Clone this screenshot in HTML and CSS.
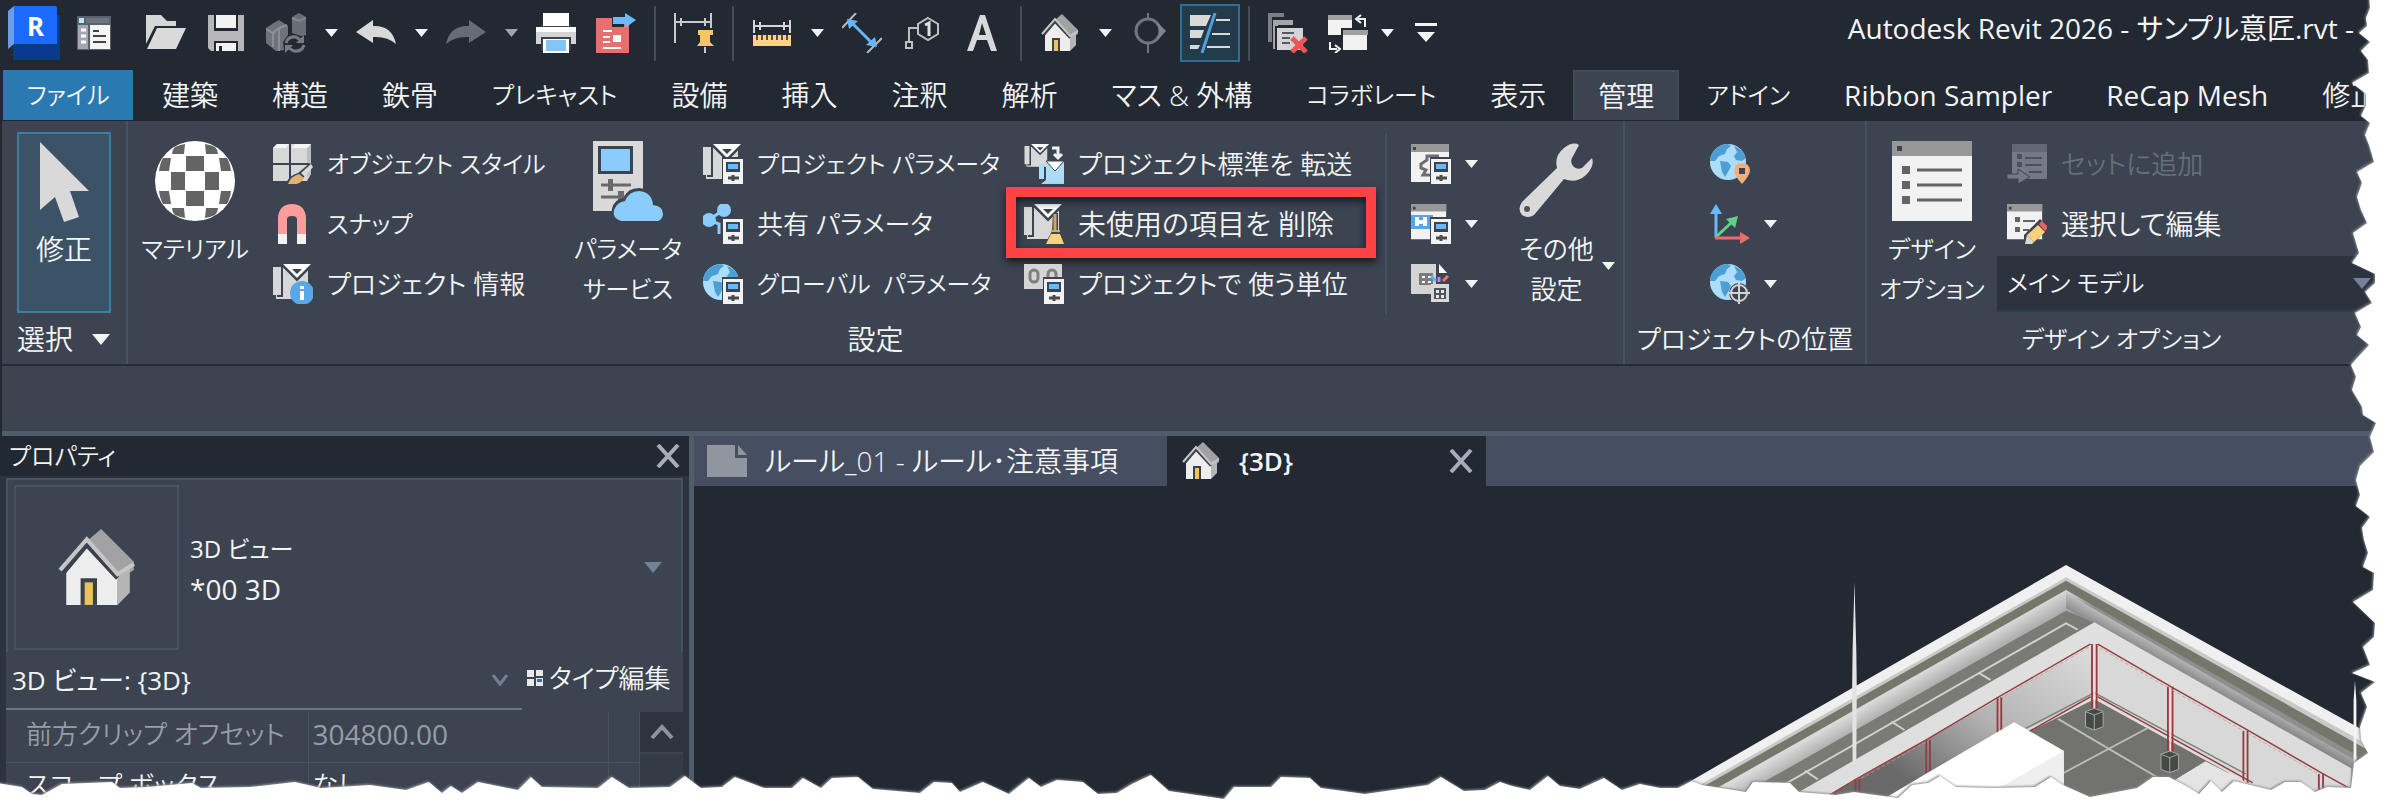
FILE: index.html
```html
<!DOCTYPE html>
<html lang="ja">
<head>
<meta charset="utf-8">
<title>Autodesk Revit 2026 - サンプル意匠.rvt</title>
<link rel="stylesheet" href="styles.css">
</head>
<body>
<svg class="defs" aria-hidden="true">
  <defs>
    <symbol id="caret" viewBox="0 0 13 8"><path d="M0 0h13L6.500 8z" fill="currentColor"/></symbol>
    <symbol id="house" viewBox="0 0 40 40">
      <path d="M15 7L22 1L38 17V21L30 26z" fill="#a2a2a2"/>
      <path d="M30 24l6-5v13l-6 6z" fill="#b5b5b5"/>
      <path d="M5 20L15 9l15 15v14H5z" fill="#ededed"/>
      <path d="M4 22L15 9l15 16" fill="none" stroke="#3b424e" stroke-width="2"/>
      <path d="M2 21L15 6l15 17 8-5" fill="none" stroke="#c6c6c6" stroke-width="2"/>
      <path d="M12 25h8v13h-8z" fill="#3b424e"/><path d="M14 27h4v11h-4z" fill="#edc45c"/>
    </symbol>
    <symbol id="globe" viewBox="0 0 40 40">
      <circle cx="18" cy="18" r="18" fill="#aeddfb"/>
      <path d="M3 8Q9 0 18 0l3 2-4 3-2 5-6 2-4 5H0Q0 12 3 8zM24 2q8 2 12 12l-4 3-6-1-2-4 3-4zM10 17l8 1 3 4-3 6-3 5-3-5z" fill="#4b9fd5"/>
    </symbol>
    <symbol id="badge" viewBox="0 0 21 27">
      <path d="M0 0h21v27H0z" fill="#3c4452"/><path d="M1 2h20v25H1z" fill="#f2f2f2"/>
      <path d="M4 5h14v10H4z" fill="#3c4452"/><path d="M6 7h10v5H6z" fill="#69b8f7"/>
      <path d="M6 21h11M11 18v6" stroke="#4a4a4a" stroke-width="3"/>
    </symbol>
    <symbol id="plan" viewBox="0 0 40 40">
      <path d="M0 3h8v32H3v-4H0zM10 3l14 13L35 5v30H4v-3h6z" fill="#d8d8d8"/>
      <path d="M9 3v29H4" fill="none" stroke="#3c4452" stroke-width="2"/>
      <path d="M10 0h28L24 14z" fill="#fff"/><path d="M8 0l16 16L39 1" fill="none" stroke="#3c4452" stroke-width="2"/>
      <path d="M19 5h10l-5 5z" fill="#3c4452"/>
    </symbol>
    <symbol id="sheet" viewBox="0 0 40 40">
      <path d="M0 0h38v38H0z" fill="#f2f2f2"/><path d="M0 0h38v8H0z" fill="#989898"/><path d="M2 3h3v3H2z" fill="#3c4452"/>
    </symbol>
    <symbol id="close" viewBox="0 0 24 24"><path d="M2 1L22 23M22 1L2 23" stroke="#a4acb9" stroke-width="4"/></symbol>
  </defs>
</svg>

<div class="app">
  <header class="titlebar">
    <div class="qat" role="toolbar" aria-label="クイック アクセス">
      <button class="qb" aria-label="Revit"><svg width="52" height="54" viewBox="0 0 52 54"><path d="M5 9h47v43q0 2-2 2H5z" fill="#0a3a90"/><path d="M0 5L6 0v38l-6 5z" fill="#6a9dea"/><path d="M6 0h41q2 0 2 2v36H6z" fill="#1b6bff"/><text x="19" y="30" class="logo-r">R</text></svg></button>
      <button class="qb" aria-label="プロパティ"><svg width="40" height="40" viewBox="0 0 40 40"><path d="M3 3h34v34H3z" fill="#59616d"/><path d="M5 5h5v5H5z" fill="#bfe4fb"/><path d="M12 5h23v5H12z" fill="#6c7480"/><path d="M4 12h10v24H4z" fill="#a3a8b0"/><path d="M16 12h20v24H16z" fill="#f4f4f4"/><path d="M7 17h5M7 23h5M7 29h5" stroke="#fff" stroke-width="3"/><path d="M19 18h6M19 23h13M19 29h13" stroke="#444" stroke-width="2"/></svg></button>
      <button class="qb qb-gap" aria-label="開く"><svg width="40" height="40" viewBox="0 0 40 40"><path d="M0 2h15l6 6h9v5H9L0 31z" fill="#d6d6d6"/><path d="M11 15h29L30 36H1z" fill="#dadada"/></svg></button>
      <button class="qb" aria-label="保存"><svg width="40" height="40" viewBox="0 0 40 40"><path d="M2 2h36v36H5l-3-3z" fill="#b7b7b7"/><path d="M8 2h24v16H8zM8 28h24v10H8z" fill="#222933"/><path d="M10 2h20v13H10z" fill="#f2f2f2"/><path d="M10 30h20v8H16v-5h-3v5h-3z" fill="#f2f2f2"/></svg></button>
      <button class="qb" aria-label="同期"><svg width="40" height="40" viewBox="0 0 40 40"><path d="M0 15l6-4 7-4 9 6v9l-5 7 1 8-8 1-10-8z" fill="#6f7379"/><path d="M26 4l7-4 7 4v18l-5 1-9-3z" fill="#6a6e74"/><path d="M0 16l7 4 6-5 8-3M7 20v14M13 16v22" fill="none" stroke="#8b8f95" stroke-width="2"/><path d="M26 5l7 3 7-3" fill="none" stroke="#85898f" stroke-width="2"/><path d="M20 30q2-7 10-6l6 4M38 32q-2 7-10 6l-7-4" fill="none" stroke="#777b81" stroke-width="3"/><path d="M38 22v8h-8zM19 40v-8h8z" fill="#777b81"/></svg></button>
      <button class="qd" aria-label="同期メニュー"><svg class="caret"><use href="#caret"/></svg></button>
      <button class="qb" aria-label="元に戻す"><svg width="40" height="26" viewBox="0 0 40 26"><path d="M0 12L17 0v6Q36 5 40 24q-9-8-23-7v6z" fill="#d9d9d9"/></svg></button>
      <button class="qd" aria-label="元に戻すメニュー"><svg class="caret"><use href="#caret"/></svg></button>
      <button class="qb" aria-label="やり直し"><svg width="40" height="26" viewBox="0 0 40 26"><path d="M40 12L23 0v6Q4 5 0 24q9-8 23-7v6z" fill="#676c74"/></svg></button>
      <button class="qd dim" aria-label="やり直しメニュー"><svg class="caret"><use href="#caret"/></svg></button>
      <button class="qb" aria-label="印刷"><svg width="40" height="40" viewBox="0 0 40 40"><path d="M0 14h40v17H0z" fill="#d4d4d4"/><path d="M0 14h40v5H0z" fill="#fff"/><path d="M5 12h30v2H5zM5 24h30v14H5z" fill="#3a424d"/><path d="M7 0h26v13H7z" fill="#fff"/><path d="M7 26h26v14H7z" fill="#fff"/><path d="M10 27h20v11H10z" fill="#84c5f8"/></svg></button>
      <button class="qb" aria-label="PDF 書き出し"><svg width="40" height="40" viewBox="0 0 40 40"><path d="M0 5h16v9h12v-4h5v30H0z" fill="#e57070"/><path d="M7 18h9M7 24h7M7 29h7M7 35h18" stroke="#fff" stroke-width="2"/><path d="M17 22h8v7h-8z" fill="#fff"/><path d="M17 4h12V0l11 7-11 8v-4H17z" fill="#6cbafa"/></svg></button>
      <span class="qs"></span>
      <button class="qb" aria-label="固定寸法"><svg width="40" height="40" viewBox="0 0 40 40"><path d="M1 0v30M37 0v15M1 9h36M7 5v8M31 5v8" stroke="#c9c9c9" stroke-width="2"/><path d="M24 17h15v5h-3v7l4 4H23l3-4v-7h-2z" fill="#f6c46a"/><path d="M31 34v6" stroke="#c9c9c9" stroke-width="2"/></svg></button>
      <span class="qs"></span>
      <button class="qb" aria-label="計測"><svg width="40" height="40" viewBox="0 0 40 40"><path d="M2 7v13M38 7v13M2 13h36M8 9v8M32 9v8" stroke="#d6d6d6" stroke-width="2"/><path d="M1 22h38v11H1z" fill="#ffd47d"/><path d="M5 22v5M10 22v5M15 22v5M20 22v5M25 22v5M30 22v5M35 22v5" stroke="#5a4d35" stroke-width="2"/></svg></button>
      <button class="qd" aria-label="計測メニュー"><svg class="caret"><use href="#caret"/></svg></button>
      <button class="qb" aria-label="平行寸法"><svg width="40" height="40" viewBox="0 0 40 40"><path d="M14 0L0 15M40 25L25 40" stroke="#b9b9b9" stroke-width="2"/><path d="M9 9l22 22" stroke="#68b6f5" stroke-width="3"/><path d="M5 6l11 2-9 8zM35 34l-11-2 9-8z" fill="#68b6f5"/></svg></button>
      <button class="qb" aria-label="タグ"><svg width="40" height="40" viewBox="0 0 40 40"><path d="M26 5l10 6v10l-10 6-10-6V11zM16 15H7v13" fill="none" stroke="#bfbfbf" stroke-width="2"/><path d="M4 29h6v6H4z" fill="none" stroke="#bfbfbf" stroke-width="2"/><path d="M23 12l4-2v13" fill="none" stroke="#e0e0e0" stroke-width="3"/></svg></button>
      <button class="qb" aria-label="文字"><svg width="40" height="40" viewBox="0 0 40 40"><path d="M5 38L18 2h5l12 36h-6l-4-11H15l-4 11zM17 22h7L20 10z" fill="#d9d9d9" fill-rule="evenodd"/></svg></button>
      <span class="qs"></span>
      <button class="qb" aria-label="既定の 3D ビュー"><svg width="40" height="40"><use href="#house"/></svg></button>
      <button class="qd" aria-label="3D ビューメニュー"><svg class="caret"><use href="#caret"/></svg></button>
      <button class="qb" aria-label="断面"><svg width="40" height="40" viewBox="0 0 40 40"><circle cx="18" cy="18" r="12" fill="none" stroke="#70757d" stroke-width="3"/><path d="M26 8l10 10-10 11q7-10 0-21z" fill="#80858d"/><path d="M18 0v7M18 30v10" stroke="#70757d" stroke-width="2"/></svg></button>
      <button class="qb toggle" aria-label="細線" aria-pressed="true"><svg width="40" height="40" viewBox="0 0 40 40"><path d="M0 2h21l-5 11H0zM0 17h14l-3 8H0zM0 32h10l-2 4H0z" fill="#d9d9d9"/><path d="M26 7h14M22 21h18M17 34h23" stroke="#d9d9d9" stroke-width="2"/><path d="M25 0L12 40" stroke="#4f9fd8" stroke-width="3"/></svg></button>
      <span class="qs"></span>
      <button class="qb" aria-label="非アクティブを閉じる"><svg width="40" height="40" viewBox="0 0 40 40"><path d="M0 0h16v4H4v25H0z" fill="#7a7f87"/><path d="M5 7h20v5H10v24H5z" fill="#a6a6a6"/><path d="M8 14h28v24H8z" fill="#d4d4d4" stroke="#222933" stroke-width="2"/><path d="M14 20h12M14 25h8M14 30h8" stroke="#555b64" stroke-width="2"/><path d="M24 25l14 14M38 25L24 39" stroke="#ee5454" stroke-width="5"/></svg></button>
      <button class="qb" aria-label="ウィンドウ切り替え"><svg width="40" height="40" viewBox="0 0 40 40"><path d="M0 2h24v20H0z" fill="#f2f2f2"/><path d="M0 2h24v5H0z" fill="#a0a0a0"/><path d="M14 16h26v22H14z" fill="#f2f2f2" stroke="#222933" stroke-width="2"/><path d="M15 17h25v5H15z" fill="#a0a0a0"/><path d="M37 14V6h-7M33 2l-5 4 5 4M2 29v7h7M7 32l5 4-5 4" fill="none" stroke="#f2f2f2" stroke-width="2"/></svg></button>
      <button class="qd snug" aria-label="ウィンドウメニュー"><svg class="caret"><use href="#caret"/></svg></button>
      <button class="qd" aria-label="カスタマイズ"><svg width="22" height="20" viewBox="0 0 22 20"><path d="M0 0h22v3H0zM2 9h18l-9 10z" fill="#f4f4f4"/></svg></button>
    </div>
    <h1 class="title">Autodesk Revit 2026 - サンプル意匠.rvt -</h1>
  </header>

  <nav class="tabs" aria-label="リボン タブ">
    <button class="tab file k">ファイル</button>
    <button class="tab">建築</button>
    <button class="tab">構造</button>
    <button class="tab">鉄骨</button>
    <button class="tab k">プレキャスト</button>
    <button class="tab">設備</button>
    <button class="tab">挿入</button>
    <button class="tab">注釈</button>
    <button class="tab">解析</button>
    <button class="tab">マス &amp; 外構</button>
    <button class="tab k">コラボレート</button>
    <button class="tab">表示</button>
    <button class="tab active">管理</button>
    <button class="tab k">アドイン</button>
    <button class="tab latin">Ribbon Sampler</button>
    <button class="tab latin">ReCap Mesh</button>
    <button class="tab">修正</button>
  </nav>

  <section class="ribbon">
    <div class="panel p-select">
      <div class="body">
        <button class="modify"><svg width="50" height="80" viewBox="0 0 50 80"><path d="M1 0L50 49H31l9 26-15 5-9-25L1 68z" fill="#d9d9d9"/></svg><span class="lbl">修正</span></button>
      </div>
      <button class="ptitle">選択 <svg class="caret big"><use href="#caret"/></svg></button>
    </div>

    <div class="panel p-set">
      <div class="body">
        <button class="large w-mat"><svg width="80" height="80" viewBox="0 0 80 80"><circle cx="40" cy="40" r="40" fill="#fff"/><g fill="#646464"><path d="M31 15h18v15H31zM31 50h18v15H31zM16 31h14v18H16zM50 31h14v18H50z"/><path d="M20 6q4-2 10-3l-1 10H17q0-4 3-7zM60 6q-4-2-10-3l1 10h12q0-4-3-7zM20 74q4 2 10 3l-1-10H17q0 4 3 7zM60 74q-4 2-10 3l1-10h12q0 4-3 7z"/><path d="M8 17h8l-2 13H4q1-8 4-13zM72 17h-8l2 13h10q-1-8-4-13zM8 63h8l-2-13H4q1 8 4 13zM72 63h-8l2-13h10q-1 8-4 13z"/></g></svg><span class="lbl k">マテリアル</span></button>
        <div class="stack w-c1">
          <button class="row k"><svg width="40" height="40" viewBox="0 0 40 40"><path d="M0 4l4-4h34v30l-4 7H0z" fill="#d8d8d8"/><path d="M34 4l4-4v30l-4 3z" fill="#bdbdbd"/><path d="M0 4l4-4h12l-3 4zM19 4l3-4h16l-4 4z" fill="#f4f4f4"/><path d="M17 0v38M0 20h36" stroke="#3c4452" stroke-width="2"/><path d="M13 40q2-8 12-11l12-10 3 4-10 11q-4 8-17 8z" fill="#3c4452"/><path d="M15 40q3-8 11-10l5 4q-4 8-16 6z" fill="#e0b272"/><path d="M28 29l10-9 2 3-8 10z" fill="#d9d9d9"/></svg>オブジェクト スタイル</button>
          <button class="row k"><svg width="40" height="40" viewBox="0 0 40 40"><path d="M5 40V14Q6 0 19 0t14 14v26h-9V15q0-3-5-3t-5 3v25z" fill="#ff9c9c"/><path d="M5 30h9v10H5zM24 30h9v10h-9z" fill="#f2f2f2"/></svg>スナップ</button>
          <button class="row m"><svg width="40" height="40" viewBox="0 0 40 40"><use href="#plan" width="40" height="40"/><circle cx="29" cy="29" r="12" fill="#57a8e6"/><path d="M27 22h4v3h-4zM27 27h4v9h-4z" fill="#fff"/></svg>プロジェクト 情報</button>
        </div>
        <button class="large w-svc"><svg width="80" height="80" viewBox="0 0 80 80"><path d="M5 0h50v70H5z" fill="#d9d9d9"/><path d="M10 5h35v28H10z" fill="#3c4452"/><path d="M13 8h29v22H13z" fill="#8accfc"/><path d="M13 44h30M13 56h30" stroke="#6a6a6a" stroke-width="3"/><path d="M20 38h5v12h-5zM30 50h6v12h-6z" fill="#6a6a6a"/><path d="M33 82Q22 78 24 68q2-10 12-11 3-10 15-10 13 1 15 14 10 1 10 11 0 7-6 10z" fill="#3c4452"/><path d="M33 80Q24 77 26 69q3-8 11-9 4-10 14-10 13 1 14 14 10 1 10 9 0 5-5 7z" fill="#8accfc"/></svg><span class="lbl k">パラメータ<br>サービス</span></button>
        <div class="stack w-c2">
          <button class="row k"><svg width="40" height="40" viewBox="0 0 40 40"><use href="#plan" width="40" height="40"/><use href="#badge" x="19" y="13" width="21" height="27"/></svg>プロジェクト パラメータ</button>
          <button class="row m"><svg width="40" height="40" viewBox="0 0 40 40"><path d="M6 16L20 6M6 16l10 4v10" fill="none" stroke="#8accfc" stroke-width="3"/><circle cx="6" cy="16" r="7" fill="#8accfc"/><circle cx="21" cy="6" r="7" fill="#8accfc"/><use href="#badge" x="19" y="13" width="21" height="27"/></svg>共有 パラメータ</button>
          <button class="row k"><svg width="40" height="40" viewBox="0 0 40 40"><use href="#globe" width="40" height="40"/><use href="#badge" x="19" y="13" width="21" height="27"/></svg><span class="pre">グローバル  パラメータ</span></button>
        </div>
        <div class="stack w-c3">
          <button class="row m"><svg width="40" height="40" viewBox="0 0 40 40"><use href="#plan" width="27" height="26"/><path d="M28 4h6v8M30 10l4 4 4-4" fill="none" stroke="#f2f2f2" stroke-width="3"/><path d="M15 20h5v15h-5zM22 17h18v23H17l5-4z" fill="#aedbfa"/><path d="M22 17h18l-9 10z" fill="#fff" stroke="#3c4452"/></svg>プロジェクト標準を 転送</button>
          <button class="row marked"><svg width="40" height="40" viewBox="0 0 40 40"><use href="#plan" width="40" height="40"/><path d="M29 9h5v18l6 13H21l7-13z" fill="#3c4452"/><path d="M31 10v18" stroke="#d8a55c" stroke-width="3"/><path d="M27 30h9l4 10H22z" fill="#ffd27a"/><path d="M27 26h9v2h-9z" fill="#d8a55c"/></svg>未使用の項目を 削除</button>
          <button class="row m"><svg width="40" height="40" viewBox="0 0 40 40"><path d="M0 0h38v25H0z" fill="#d4d4d4"/><rect x="6" y="6" width="8" height="12" rx="4" fill="none" stroke="#808080" stroke-width="3"/><rect x="24" y="6" width="8" height="12" rx="4" fill="none" stroke="#808080" stroke-width="3"/><use href="#badge" x="19" y="13" width="21" height="27"/></svg>プロジェクトで 使う単位</button>
        </div>
        <div class="stack w-c4">
          <button class="row tight" aria-label="設備設定"><svg width="40" height="40" viewBox="0 0 40 40"><use href="#sheet" width="40" height="40"/><path d="M28 12H16v4l-6 4v4l5 2-3 5h8" fill="none" stroke="#6e6e6e" stroke-width="3"/><use href="#badge" x="19" y="13" width="21" height="27"/></svg><svg class="caret"><use href="#caret"/></svg></button>
          <button class="row tight" aria-label="構造設定"><svg width="40" height="40" viewBox="0 0 40 40"><use href="#sheet" width="37" height="37"/><path d="M0 11h22v14H0z" fill="#58a6e3"/><path d="M6 13v9M14 13v9M6 18h8" stroke="#fff" stroke-width="4"/><use href="#badge" x="19" y="13" width="21" height="27"/></svg><svg class="caret"><use href="#caret"/></svg></button>
          <button class="row tight" aria-label="パネル集計表"><svg width="40" height="40" viewBox="0 0 40 40"><path d="M0 0h25v30H0z" fill="#d4d4d4"/><path d="M8 9h14v12H8z" fill="#7b7b7b"/><path d="M11 12h3v2h-3zM17 12h3v2h-3zM11 17h3v2h-3zM17 17h3v2h-3z" fill="#fff"/><path d="M28 0l8 9h-8z" fill="#fff"/><path d="M20 12l5 5" stroke="#5bb0f2" stroke-width="3"/><path d="M28 13v5" stroke="#b684f2" stroke-width="3"/><path d="M32 17l5-5" stroke="#ee7373" stroke-width="3"/><path d="M20 20h18v18H20z" fill="#d9d9d9"/><path d="M23 24h12v11H23z" fill="#4c5462"/><path d="M25 26h3v3h-3zM30 26h3v3h-3zM25 31h3v3h-3zM30 31h3v3h-3z" fill="#e8e8e8"/></svg><svg class="caret"><use href="#caret"/></svg></button>
        </div>
        <button class="large w-etc"><svg width="80" height="80" viewBox="0 0 80 80"><path d="M62 4q-6-4-15 3-10 8-7 20L5 61q-5 7 0 13 6 4 12 0L47 38q12 5 22-4 9-9 6-17L65 27q-6 2-9-2-3-4-1-8z" fill="#d9d9d9"/><circle cx="10" cy="68" r="3" fill="#4c5462"/></svg><span class="lbl m">その他<br>設定</span><svg class="caret side"><use href="#caret"/></svg></button>
      </div>
      <div class="ptitle">設定</div>
    </div>

    <div class="panel p-loc">
      <div class="body">
        <div class="stack">
          <button class="row tight" aria-label="場所"><svg width="40" height="40" viewBox="0 0 40 40"><use href="#globe" width="40" height="40"/><path d="M32 40q-8-9-8-14 1-7 8-7t8 7q0 5-8 14z" fill="#f4ae7c"/><path d="M29 24h6v6h-6z" fill="#3c4452"/></svg></button>
          <button class="row tight" aria-label="座標"><svg width="40" height="40" viewBox="0 0 40 40"><path d="M6 34V8" stroke="#6cb9f8" stroke-width="3"/><path d="M0 10L6 0l6 10z" fill="#6cb9f8"/><path d="M7 32l14-13" stroke="#5ed287" stroke-width="3"/><path d="M16 15l12-3-3 12z" fill="#5ed287"/><path d="M5 34h27" stroke="#e76c6c" stroke-width="3"/><path d="M30 28l10 6-10 6z" fill="#e76c6c"/></svg><svg class="caret"><use href="#caret"/></svg></button>
          <button class="row tight" aria-label="位置"><svg width="40" height="40" viewBox="0 0 40 40"><use href="#globe" width="40" height="40"/><circle cx="29" cy="29" r="10" fill="#3c4452"/><circle cx="29" cy="29" r="8" fill="none" stroke="#d4d4d4" stroke-width="2"/><path d="M29 18v22M18 29h22" stroke="#d4d4d4" stroke-width="2"/></svg><svg class="caret"><use href="#caret"/></svg></button>
        </div>
      </div>
      <div class="ptitle m">プロジェクトの位置</div>
    </div>

    <div class="panel p-opt">
      <div class="body">
        <button class="large w-opt"><svg width="80" height="80" viewBox="0 0 80 80"><path d="M0 0h80v80H0z" fill="#f2f2f2"/><path d="M0 0h80v15H0z" fill="#989898"/><path d="M5 5h5v5H5z" fill="#3c4452"/><path d="M10 25h8v8h-8zM10 40h8v8h-8zM10 55h8v8h-8z" fill="#646464"/><path d="M25 29h45M25 44h45M25 59h45" stroke="#646464" stroke-width="3"/></svg><span class="lbl k">デザイン<br>オプション</span></button>
        <div class="stack grow">
          <button class="row m inset" disabled><svg width="40" height="40" viewBox="0 0 40 40"><path d="M5 0h35v35H5z" fill="#737a87"/><path d="M5 0h35v8H5z" fill="#626874"/><path d="M10 10h5v5h-5zM10 18h5v5h-5z" fill="#4b525e"/><path d="M18 14h17M18 21h17M22 28h13" stroke="#4b525e" stroke-width="2"/><path d="M0 30h11v-5l12 8-12 7v-5H0z" fill="#737a87" stroke="#3c4452"/></svg>セットに追加</button>
          <button class="row inset"><svg width="40" height="40" viewBox="0 0 40 40"><use href="#sheet" width="37" height="37"/><path d="M8 13h5v5H8zM8 23h5v5H8z" fill="#646464"/><path d="M16 17h12M16 26h6" stroke="#646464" stroke-width="2"/><path d="M17 40V31L33 15l9 8-16 17z" fill="#3c4452"/><path d="M18 40l2-9 7 7-2 2z" fill="#d9d9d9"/><path d="M20 31l11-10 7 7-11 10z" fill="#ffd27a"/><path d="M32 20l3-3 6 6-3 4z" fill="#f06262"/></svg>選択して編集</button>
          <div class="combo">
            <select class="k" aria-label="アクティブ デザイン オプション"><option>メイン モデル</option></select>
            <svg class="caret blue"><use href="#caret"/></svg>
          </div>
        </div>
      </div>
      <div class="ptitle k">デザイン オプション</div>
    </div>
  </section>

  <div class="optionsbar"></div>

  <main class="work">
    <aside class="props">
      <header class="phead m"><h2>プロパティ</h2><button aria-label="閉じる"><svg width="24" height="24"><use href="#close"/></svg></button></header>
      <div class="pbody">
        <button class="type">
          <span class="thumb"><svg width="82" height="82"><use href="#house"/></svg></span>
          <span class="tname"><span class="k">3D ビュー</span><br>*00 3D</span>
          <svg class="caret blue"><use href="#caret"/></svg>
        </button>
        <div class="inst">
          <div class="pick">
            <select class="m" aria-label="インスタンス"><option>3D ビュー: {3D}</option></select>
            <svg width="18" height="16" viewBox="0 0 18 16"><path d="M2 3l7 9 7-9" fill="none" stroke="#6f7f94" stroke-width="3"/></svg>
          </div>
          <button class="etype m"><svg width="16" height="16" viewBox="0 0 16 16"><path d="M0 0h7v7H0zM9 0h7v6H9zM0 9h7v7H0zM9 8h7v8H9z" fill="#e8e8e8"/><path d="M10 9h5v3h-5z" fill="#2b6cc4"/></svg>タイプ編集</button>
        </div>
        <div class="grid">
          <table class="m">
            <tbody>
              <tr class="ro"><th scope="row">前方クリップ オフセット</th><td class="num">304800.00</td><td class="btncell"></td></tr>
              <tr><th scope="row">スコープ ボックス</th><td>なし</td><td class="btncell"></td></tr>
            </tbody>
          </table>
          <div class="scroll"><button aria-label="上へスクロール"><svg width="24" height="16" viewBox="0 0 24 16"><path d="M2 14l10-11 10 11" fill="none" stroke="#8d939c" stroke-width="4"/></svg></button></div>
        </div>
      </div>
    </aside>

    <section class="view">
      <div class="vtabs">
        <button class="vtab"><svg width="40" height="32" viewBox="0 0 40 32"><path d="M0 0h28v13h12v19H0z" fill="#90959f"/><path d="M31 0l9 10h-9z" fill="#90959f"/></svg><span>ルール_01 - ルール･注意事項</span></button>
        <div class="vtab current"><svg width="40" height="40"><use href="#house"/></svg><span class="vname">{3D}</span><button aria-label="閉じる"><svg width="24" height="24"><use href="#close"/></svg></button></div>
      </div>
      <div class="canvas">
        <svg class="model" viewBox="0 0 1568 804" preserveAspectRatio="none" role="img" aria-label="3D モデル">
          <defs>
            <linearGradient id="gw" x1="0" y1="0" x2="1" y2="1"><stop offset="0" stop-color="#e2e2e2"/><stop offset="1" stop-color="#dadada"/></linearGradient>
            <linearGradient id="gl" gradientUnits="userSpaceOnUse" x1="938" y1="330" x2="560" y2="740"><stop offset="0" stop-color="#dcdcdc"/><stop offset=".55" stop-color="#b4b4b4"/><stop offset="1" stop-color="#6a6a6a"/></linearGradient>
            <linearGradient id="gr" gradientUnits="userSpaceOnUse" x1="1180" y1="385" x2="1130" y2="450"><stop offset="0" stop-color="#c4c4c4"/><stop offset="1" stop-color="#545454"/></linearGradient>
            <linearGradient id="gi" gradientUnits="userSpaceOnUse" x1="600" y1="370" x2="650" y2="432"><stop offset="0" stop-color="#dadada"/><stop offset="1" stop-color="#8e8e8e"/></linearGradient>
          </defs>
          <path d="M877 75L1515 568L1532 642L1495 685V804H-35z" fill="#f0f0f0"/>
          <path d="M877 112L1522 608V804H-2z" fill="#c9c9c9"/>
          <path d="M877 122L1532 632V690L1495 685V804H12z" fill="#74776a"/>
          <path d="M877 150L1508 648L1495 690V804H47z" fill="url(#gi)"/>
          <path d="M877 158L1500 660L1493 690L938 247L877 205z" fill="url(#gr)"/>
          <path d="M877 212L940 250L300 804H125z" fill="#7b7b76"/>
          <path d="M902 269L877 250L230 764M690 400l24 20M500 545l28 25M313 692l28 26" fill="none" stroke="#d2d2ce" stroke-width="5"/>
          <path d="M938 247L1493 685V804H240z" fill="url(#gw)"/>
          <path d="M938 312L310 810H440L938 468z" fill="url(#gl)"/>
          <path d="M938 312L1493 752V804H1380L938 468z" fill="#d8d8d8"/>
          <path d="M938 478L790 580V804H1100L1230 700z" fill="#72726e"/>
          <path d="M860 537L1090 725M1052 565L870 700" stroke="#bdbdb9" stroke-width="5"/>
          <path d="M938 458L790 565M938 458L1265 702" stroke="#7c827c" stroke-width="4"/>
          <g fill="none" stroke="#963c3f" stroke-width="4">
            <path d="M930 312L735 468L578 597L425 716L360 770M945 312L1100 437L1265 567L1428 698L1485 742M930 470L795 576M945 470L1280 728"/>
            <path d="M933 312V510M943 312V510M729 472V580M737 472V580M575 600V700M583 600V700M422 718V765M431 718V765M1097 440V640M1107 440V640M1260 572V730M1269 572V730M1423 702V750M1432 702V750"/>
          </g>
          <path d="M938 320V510M1102 445V640" stroke="#e8dcdc" stroke-width="4"/>
          <path d="M926 322L738 473M574 606L432 717M950 324L1096 443M1106 450L1260 573M1270 580L1424 704" stroke="#c79a9b" stroke-width="2" stroke-dasharray="9 5"/>
          <g fill="#444b46" stroke="#b9bdb9" stroke-width="2"><path d="M919 515l19-10 19 10v45l-19 10-19-10zM1082 643l19-10 19 10v45l-19 10-19-10z"/><path d="M919 515l19 10 19-10M938 525v45M1082 643l19 10 19-10M1101 653v45"/></g>
          <path d="M765 547L872 632V804H450L580 697z" fill="#fff"/>
          <path d="M872 632V804H660L740 738z" fill="#efefef"/>
          <path d="M1178 664L1100 730V804H1300V750z" fill="#e4e4e4"/>
          <path d="M420 124l4 206 1 110-1 225h-8l-1-225 1-110z" fill="#e3e3e3"/>
          <path d="M1501 422l3 60v198h-6V482z" fill="#f4f4f4"/>
        </svg>
      </div>
    </section>
  </main>

  <svg class="torn" viewBox="0 0 2386 808" preserveAspectRatio="none" aria-hidden="true"><path d="M2390 -4L2369 -4 2370 8 2366 18 2367 26 2359 33 2370 42 2361 51 2368 60 2369 73 2352 83 2366 94 2366 105 2361 116 2370 123 2365 135 2369 145 2374 162 2357 172 2362 183 2357 197 2361 210 2367 223 2353 233 2359 253 2352 263 2375 274 2375 283 2365 292 2372 303 2355 313 2361 327 2357 335 2369 345 2358 357 2351 365 2356 377 2352 390 2362 407 2363 415 2376 423 2370 437 2374 452 2360 466 2356 480 2360 495 2356 506 2370 517 2362 528 2364 540 2368 553 2363 567 2374 573 2373 590 2353 602 2375 623 2374 637 2363 647 2370 665 2352 673 2375 682 2361 693 2367 707 2360 727 2361 740 2368 753 2354 763 2351 788 2327 787 2315 792 2301 782 2285 782 2271 790 2234 781 2222 792 2211 781 2199 794 2188 787 2169 777 2153 777 2137 788 2090 797 2063 785 2051 777 2035 787 1993 788 1956 787 1940 776 1928 783 1912 785 1898 798 1854 792 1836 795 1799 792 1790 783 1753 782 1746 792 1702 785 1692 781 1678 788 1660 788 1640 784 1622 790 1604 778 1580 789 1560 786 1548 776 1530 790 1512 786 1500 782 1485 790 1464 791 1441 777 1428 785 1365 794 1321 788 1310 778 1281 777 1271 787 1234 787 1224 799 1169 791 1151 775 1132 784 1117 793 1098 794 1083 782 1057 780 1041 787 1029 778 1009 794 983 782 960 792 952 783 934 782 920 793 873 789 858 777 832 778 821 788 803 778 792 788 764 788 735 777 722 787 701 788 685 776 670 787 629 788 612 777 598 788 542 787 531 777 518 790 478 782 462 793 451 786 442 793 429 782 406 790 370 785 321 788 295 782 250 787 201 788 192 783 147 787 120 788 112 782 62 784 42 795 32 794 22 787 -4 783V812H2390z" fill="#fff"/></svg>
</div>
</body>
</html>
```
FILE: styles.css
```css
*, *::after { box-sizing: border-box; }

body {
  margin: 0;
  background: #fff;
  color: #f4f4f4;
  font: 350 28px/40px "Open Sans", "Noto Sans CJK JP", sans-serif;
  font-feature-settings: "palt";
}

button, select {
  margin: 0;
  padding: 0;
  border: 0;
  background: none;
  color: inherit;
  font: inherit;
  font-feature-settings: inherit;
  white-space: nowrap;
}

h1, h2 { margin: 0; font: inherit; }
svg { flex: none; display: block; }

.defs { position: absolute; width: 0; height: 0; }
.k { font-size: 24px; }
.m { font-size: 26px; }
.pre { white-space: pre; }
.caret { width: 13px; height: 8px; }
.blue { color: #71829a; width: 20px; height: 11px; }

.app {
  position: relative;
  display: flex;
  flex-direction: column;
  height: 100vh;
  overflow: hidden;
  background: #222933;
}

/* title bar */
.titlebar {
  display: flex;
  justify-content: space-between;
  height: 70px;
  padding: 4px 32px 0 4px;
}
.qat { display: flex; align-items: flex-start; }
.qb, .qd {
  display: flex;
  align-items: center;
  justify-content: center;
  width: 60px;
  height: 58px;
}
.qd { width: 30px; }
.qd.snug { width: 18px; }
.qd.dim { color: #a0a4aa; }
.qd:last-child { width: 60px; }
.qb-gap { margin-left: 12px; }
.qs { width: 2px; height: 55px; margin: 2px 8px; background: #434c5b; }
.toggle { background: #243b4c; border: 2px solid #2c7195; }
.logo-r { font: 700 26px "Noto Sans", sans-serif; fill: #fff; }
.title { padding-top: 4px; white-space: nowrap; font-weight: 400; }

/* ribbon tabs */
.tabs { display: flex; height: 51px; padding-left: 3px; overflow: hidden; }
.tab { flex: none; height: 50px; padding: 0 27px 1px; }
.tab.file { min-width: 130px; margin-right: 2px; padding: 0 20px 1px; background: #2a7ab1; }
.tab.active { padding: 0 23px; background: #3c4452; border: 2px solid #414b59; border-bottom: 0; }
.latin { font-weight: 400; }

/* ribbon */
.ribbon {
  display: flex;
  height: 245px;
  margin-left: 2px;
  border-bottom: 2px solid #252c36;
  background: #3c4452;
}
.panel { display: flex; flex-direction: column; position: relative; flex: none; }
.panel + .panel { border-left: 2px solid #465263; }
.body { display: flex; height: 193px; padding-top: 13px; }
.ptitle {
  display: flex;
  align-items: center;
  justify-content: center;
  height: 50px;
}
.p-select { width: 124px; }
.p-select .ptitle { gap: 18px; }
.p-select .body { padding: 11px 15px 0; }
.p-opt { flex: 1; }

.modify {
  display: flex;
  flex-direction: column;
  align-items: center;
  gap: 7px;
  width: 94px;
  height: 181px;
  padding-top: 8px;
  background: #3c5267;
  border: 2px solid #37809f;
}
.caret.big { width: 20px; height: 11px; }

.large {
  position: relative;
  display: flex;
  flex-direction: column;
  align-items: center;
  gap: 8px;
  padding-top: 7px;
}
.w-mat { width: 134px; }
.w-c1 { width: 311px; padding-left: 11px; }
.w-svc { width: 110px; margin-right: 20px; }
.w-c2 { width: 321px; }
.w-c3 { width: 361px; }
.w-c4 { width: 117px; padding-left: 24px; border-left: 2px solid #465263; }
.w-etc { width: 121px; padding-right: 12px; }
.side { position: absolute; right: 8px; top: 128px; }
.w-opt { width: 130px; }

.stack { display: flex; flex-direction: column; }
.grow { flex: 1; }
.row {
  position: relative;
  display: flex;
  align-items: center;
  gap: 14px;
  height: 60px;
  text-align: left;
}
.row:disabled { color: #666e7b; }
.inset { padding-left: 10px; }

/* call-out frame round the purge command */
.marked::after {
  content: "";
  position: absolute;
  inset: -7px auto -4px -18px;
  width: 370px;
  border: 10px solid #ff4343;
  box-shadow: 0 4px 8px #141a22, inset 0 4px 8px #141a22;
}

.p-loc { width: 242px; }
.p-loc .stack { margin-left: 85px; }

.combo, .pick { display: grid; align-items: center; }
.combo select, .combo svg, .pick select, .pick svg { grid-area: 1 / 1; }
.combo svg, .pick svg { justify-self: end; pointer-events: none; }
.combo { height: 56px; margin-top: 2px; background: #2c333e; border-bottom: 2px solid #333d49; padding-right: 14px; }
.combo select { appearance: none; height: 54px; padding-left: 10px; }
.p-opt .ptitle { padding-right: 10px; }

.optionsbar { height: 70px; margin-left: 2px; background: #3c4452; border-bottom: 5px solid #4f5c6a; }

/* properties palette */
.work { display: flex; flex: 1; min-height: 0; }
.props {
  display: flex;
  flex-direction: column;
  width: 694px;
  border-right: 5px solid #4f5c6a;
  background: #2d343f;
}
.phead {
  display: flex;
  align-items: center;
  justify-content: space-between;
  height: 40px;
  padding: 0 9px;
  background: #222933;
}
.phead h2 { font-size: 24px; }
.pbody { flex: 1; margin: 2px 6px 0; background: #3c4452; overflow: hidden; }
.type {
  display: flex;
  align-items: center;
  width: 100%;
  height: 174px;
  padding: 5px 18px 2px 6px;
  border: 2px solid #475262;
  border-bottom: 0;
  text-align: left;
}
.thumb {
  display: flex;
  align-items: center;
  justify-content: center;
  width: 165px;
  height: 165px;
  margin-right: 11px;
  border: 2px solid #475262;
}
.tname { flex: 1; font-weight: 400; }
.inst { display: flex; height: 60px; }
.pick { flex: 1; height: 58px; padding-right: 13px; border-bottom: 2px solid #667588; }
.pick select { appearance: none; height: 56px; padding-left: 6px; font-weight: 400; }
.etype { display: flex; align-items: center; gap: 6px; width: 161px; height: 52px; padding-left: 5px; }
.grid { display: flex; height: 130px; }
table { flex: 1; height: 100px; border-collapse: collapse; table-layout: fixed; }
th, td { height: 50px; padding: 0 0 5px 4px; border: 1px solid #475262; border-top: 0; text-align: left; font-weight: inherit; white-space: nowrap; }
th { width: 302px; padding-left: 20px; border-left: 0; }
td.btncell { width: 31px; padding: 0; }
.num { font-size: 28px; font-weight: 400; }
.ro { color: #989ca5; }
.scroll { width: 43px; background: #333b47; }
.scroll button { display: flex; align-items: center; justify-content: center; width: 100%; height: 42px; background: #2d343f; border-bottom: 2px solid #3c4452; }

/* drawing area */
.view { display: flex; flex-direction: column; flex: 1; min-width: 0; }
.vtabs { display: flex; height: 50px; background: #464f61; }
.vtab { display: flex; align-items: center; gap: 18px; width: 473px; padding-left: 13px; }
.vtab.current { width: 319px; padding: 0 13px 0 14px; background: #222933; }
.vname { flex: 1; font-size: 26px; font-weight: 600; }
.canvas { display: flex; flex: 1; align-items: flex-end; justify-content: flex-end; overflow: hidden; }
.model { width: 726px; height: 268px; }

/* torn paper edge */
.torn {
  position: absolute;
  inset: 0;
  width: 100%;
  height: 100%;
  pointer-events: none;
  filter: drop-shadow(-1px -1px 1px #8a8a8a);
}
```
